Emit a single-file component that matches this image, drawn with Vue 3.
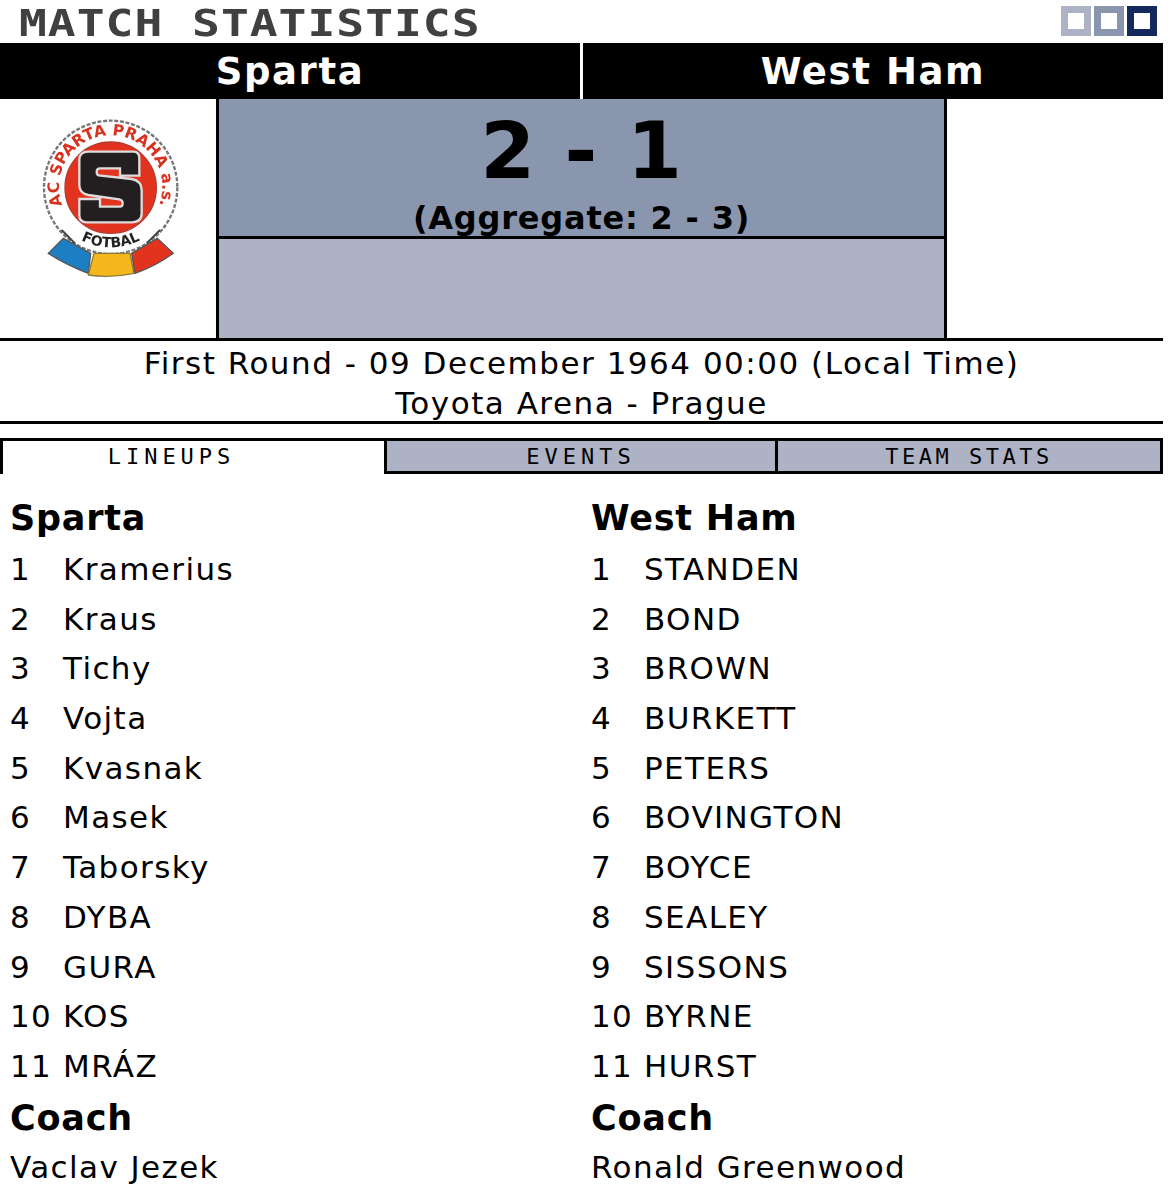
<template>
  <div class="page">
    <div class="top">
      <h1 class="page-title">MATCH STATISTICS</h1>
      <div class="skins">
        <span v-for="c in skins" :key="c" class="skin" :class="c"></span>
      </div>
    </div>

    <div class="teams">
      <div class="team">Sparta</div>
      <div class="team">West Ham</div>
    </div>

    <div class="score-row">
      <div class="crest">
        <svg class="crest-svg" width="190" height="190" viewBox="0 0 570 570">
          <circle cx="272" cy="247" r="200" fill="#fff" stroke="#777" stroke-width="7" stroke-dasharray="12 5"/>
          <path id="ring" d="M130 308 A155 155 0 1 1 414 308" fill="none"/>
          <text class="crest-ring"><textPath href="#ring" startOffset="50%" text-anchor="middle">AC SPARTA PRAHA a.s.</textPath></text>
          <path d="M125 375 L165 415 M420 375 L380 415" stroke="#444" stroke-width="6"/>
          <circle cx="272" cy="248" r="137" fill="#e2331f" stroke="#b03a30" stroke-width="4"/>
          <path d="M205 140 H340 Q358 140 358 160 V212 H300 V190 H240 Q230 190 230 200 Q230 212 242 212 L335 222 Q365 228 365 255 V325 Q365 352 335 352 H200 Q178 352 178 330 V282 H240 V305 H300 Q308 305 308 295 Q308 285 298 283 L205 270 Q178 265 178 240 V165 Q178 140 205 140 Z" fill="#231f20" stroke="#ddd" stroke-width="7"/>
          <path id="band" d="M160 392 Q272 462 384 392" fill="none"/>
          <text class="crest-fotbal"><textPath href="#band" startOffset="50%" text-anchor="middle">FOTBAL</textPath></text>
          <path d="M130 400 L212 445 L205 505 Q140 480 85 445 Z" fill="#1c7fc4" stroke="#555" stroke-width="4"/>
          <path d="M222 445 H330 L342 505 Q272 520 205 510 Z" fill="#f4b71c" stroke="#8a7a3a" stroke-width="4"/>
          <path d="M412 400 L335 445 L345 505 Q405 485 460 445 Z" fill="#e2331f" stroke="#555" stroke-width="4"/>
        </svg>
      </div>
      <div class="score-mid">
        <div class="score-top">
          <div class="score">2 - 1</div>
          <div class="aggregate">(Aggregate: 2 - 3)</div>
        </div>
        <div class="score-bottom"></div>
      </div>
      <div class="crest-empty"></div>
    </div>

    <div class="info">
      <div>First Round - 09 December 1964 00:00 (Local Time)</div>
      <div>Toyota Arena - Prague</div>
    </div>

    <div class="tabs">
      <div v-for="(t, i) in tabs" :key="t" class="tab" :class="'tab-' + i">{{ t }}</div>
    </div>

    <div class="lineups">
      <div v-for="side in sides" :key="side.name" class="side">
        <h2 class="side-name">{{ side.name }}</h2>
        <div v-for="(p, i) in side.players" :key="p" class="player">
          <span class="num">{{ i + 1 }}</span><span>{{ p }}</span>
        </div>
        <h2 class="coach-head">Coach</h2>
        <div class="coach">{{ side.coach }}</div>
      </div>
    </div>
  </div>
</template>

<script setup>
const skins = ['light', 'mid', 'dark']
const tabs = ['LINEUPS', 'EVENTS', 'TEAM STATS']
const sides = [
  {
    name: 'Sparta',
    coach: 'Vaclav Jezek',
    players: ['Kramerius', 'Kraus', 'Tichy', 'Vojta', 'Kvasnak', 'Masek', 'Taborsky', 'DYBA', 'GURA', 'KOS', 'MRÁZ'],
  },
  {
    name: 'West Ham',
    coach: 'Ronald Greenwood',
    players: ['STANDEN', 'BOND', 'BROWN', 'BURKETT', 'PETERS', 'BOVINGTON', 'BOYCE', 'SEALEY', 'SISSONS', 'BYRNE', 'HURST'],
  },
]
</script>

<style>
html, body { background: #fff; }
</style>

<style scoped>
.page {
  width: 1163px;
  height: 1200px;
  overflow: hidden;
  font-family: "DejaVu Sans", Verdana, sans-serif;
  color: #000;
}

.top {
  height: 43px;
  display: flex;
  align-items: flex-start;
  justify-content: space-between;
}

.page-title {
  margin: 0 0 0 19px;
  font-family: "DejaVu Sans Mono", monospace;
  font-size: 37px;
  font-weight: 700;
  line-height: 47px;
  letter-spacing: 0.8px;
  color: #404040;
  white-space: nowrap;
  transform: scaleX(1.25);
  transform-origin: left center;
}

.skins {
  display: flex;
  gap: 3px;
  margin: 6px 6px 0 0;
}

.skin {
  width: 30px;
  height: 30px;
  box-sizing: border-box;
  border: 7px solid;
  background: #fff;
}
.skin.light { border-color: #adb2c5; }
.skin.mid { border-color: #8a96ad; }
.skin.dark { border-color: #14295c; }

.teams {
  display: flex;
  height: 56px;
  background: #000;
}

.team {
  flex: 1;
  color: #fff;
  font-size: 37px;
  font-weight: 700;
  line-height: 58px;
  text-align: center;
  letter-spacing: 1.6px;
}
.team:first-child { border-right: 3px solid #fff; }

.score-row {
  display: flex;
  height: 239px;
  border-bottom: 3px solid #000;
}

.crest {
  width: 216px;
  padding: 6px 0 0 20px;
  box-sizing: border-box;
}

.crest-svg {
  display: block;
  filter: blur(0.5px);
}

.crest-ring {
  font-size: 47px;
  font-weight: 700;
  fill: #d8321f;
}

.crest-fotbal {
  font-size: 42px;
  font-weight: 700;
  fill: #222;
}

.score-mid {
  width: 731px;
  box-sizing: border-box;
  border-left: 3px solid #000;
  border-right: 3px solid #000;
  display: flex;
  flex-direction: column;
}

.score-top {
  height: 137px;
  background: #8a96ad;
  text-align: center;
  border-bottom: 3px solid #000;
}

.score {
  font-size: 79px;
  font-weight: 700;
  line-height: 100px;
  padding-top: 2px;
  letter-spacing: 1px;
}

.aggregate {
  font-size: 32px;
  font-weight: 700;
  line-height: 34px;
  letter-spacing: 0.8px;
}

.score-bottom {
  flex: 1;
  background: #adb2c5;
}

.info {
  height: 78px;
  border-bottom: 3px solid #000;
  text-align: center;
  font-size: 31px;
  line-height: 40px;
  letter-spacing: 1.5px;
  padding-top: 2px;
}

.tabs {
  display: flex;
  margin-top: 14px;
  height: 36px;
  box-sizing: border-box;
  border-top: 3px solid #000;
}

.tab {
  box-sizing: border-box;
  background: #adb2c5;
  border-bottom: 3px solid #000;
  border-right: 3px solid #000;
  font-family: "DejaVu Sans Mono", monospace;
  font-size: 22px;
  letter-spacing: 5px;
  line-height: 31px;
  text-align: center;
}

.tab-0 {
  width: 387px;
  padding-right: 44px;
  background: #fff;
  border-bottom: none;
  border-left: 3px solid #000;
}
.tab-1 { width: 391px; }
.tab-2 { width: 385px; letter-spacing: 3.5px; }

.lineups {
  display: flex;
  padding-top: 22px;
}

.side {
  width: 581px;
  padding-left: 10px;
  box-sizing: border-box;
}

.side-name,
.coach-head {
  margin: 0;
  font-size: 35px;
  font-weight: 700;
  line-height: 44px;
  letter-spacing: 0.8px;
}

.side-name { margin-bottom: 5px; }

.player {
  font-size: 31px;
  line-height: 49.7px;
  height: 49.7px;
  display: flex;
  white-space: nowrap;
  letter-spacing: 1.4px;
}

.num { width: 53px; }

.coach-head { margin-top: 4px; }

.coach {
  font-size: 31px;
  line-height: 54px;
  letter-spacing: 1.4px;
  white-space: nowrap;
}
</style>
